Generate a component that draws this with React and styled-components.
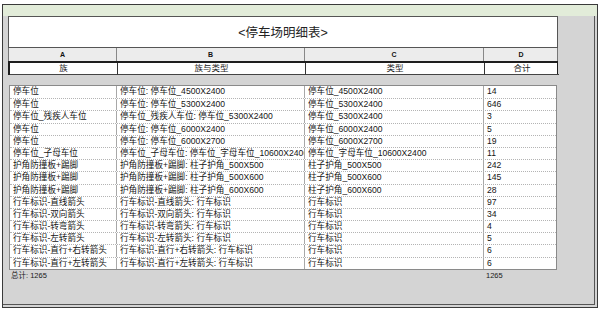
import styled, { createGlobalStyle } from "styled-components";

const GlobalStyle = createGlobalStyle`
  html, body {
    margin: 0;
    padding: 0;
    background: #ffffff;
  }
  body {
    font-family: "Liberation Sans", "Noto Sans CJK SC", sans-serif;
    color: #1a1a1a;
  }
`;

const cols = "108px 188px 179px 74px";

const rows = [
  ["停车位", "停车位: 停车位_4500X2400", "停车位_4500X2400", "14"],
  ["停车位", "停车位: 停车位_5300X2400", "停车位_5300X2400", "646"],
  ["停车位_残疾人车位", "停车位_残疾人车位: 停车位_5300X2400", "停车位_5300X2400", "3"],
  ["停车位", "停车位: 停车位_6000X2400", "停车位_6000X2400", "5"],
  ["停车位", "停车位: 停车位_6000X2700", "停车位_6000X2700", "19"],
  ["停车位_子母车位", "停车位_子母车位: 停车位_字母车位_10600X2400", "停车位_字母车位_10600X2400", "11"],
  ["护角防撞板+踢脚", "护角防撞板+踢脚: 柱子护角_500X500", "柱子护角_500X500", "242"],
  ["护角防撞板+踢脚", "护角防撞板+踢脚: 柱子护角_500X600", "柱子护角_500X600", "145"],
  ["护角防撞板+踢脚", "护角防撞板+踢脚: 柱子护角_600X600", "柱子护角_600X600", "28"],
  ["行车标识-直线箭头", "行车标识-直线箭头: 行车标识", "行车标识", "97"],
  ["行车标识-双向箭头", "行车标识-双向箭头: 行车标识", "行车标识", "34"],
  ["行车标识-转弯箭头", "行车标识-转弯箭头: 行车标识", "行车标识", "4"],
  ["行车标识-左转箭头", "行车标识-左转箭头: 行车标识", "行车标识", "5"],
  ["行车标识-直行+右转箭头", "行车标识-直行+右转箭头: 行车标识", "行车标识", "6"],
  ["行车标识-直行+左转箭头", "行车标识-直行+左转箭头: 行车标识", "行车标识", "6"],
];

export default function App() {
  return (
    <>
      <GlobalStyle />
      <Frame>
        <TitleBar />
        <Body>
          <Sheet>
            <TitleBox>&lt;停车场明细表&gt;</TitleBox>
            <LetterRow>
              <Letter>A</Letter>
              <Letter>B</Letter>
              <Letter>C</Letter>
              <Letter last>D</Letter>
            </LetterRow>
            <NameRow>
              <Name>族</Name>
              <Name>族与类型</Name>
              <Name>类型</Name>
              <Name last>合计</Name>
            </NameRow>
            <Gap />
            <Data>
              {rows.map((r, i) => (
                <Row key={i} first={i === 0}>
                  {r.map((c, j) => (
                    <Cell key={j} last={j === 3}>
                      {c}
                    </Cell>
                  ))}
                </Row>
              ))}
            </Data>
            <TotalRow>
              <TotalLabel>总计: 1265</TotalLabel>
              <TotalSum>1265</TotalSum>
            </TotalRow>
          </Sheet>
        </Body>
      </Frame>
    </>
  );
}

const Frame = styled.div`
  margin: 4px 0 0 2px;
  width: 596px;
  height: 304px;
  box-sizing: border-box;
  border: 1px solid #3a3a3a;
  background: #d4d4d4;
  display: flex;
  flex-direction: column;
`;

const TitleBar = styled.div`
  height: 11px;
  background: #e2ecd9;
  flex: none;
`;

const Body = styled.div`
  flex: 1;
  margin: 0 2px 2px 0;
  border-right: 1px solid #555;
  border-bottom: 1px solid #555;
  padding: 0 0 0 5px;
`;

const Sheet = styled.div`
  width: 550px;
  display: flex;
  flex-direction: column;
`;

const TitleBox = styled.div`
  height: 29px;
  background: #fff;
  border: 1px solid #555;
  display: flex;
  align-items: center;
  justify-content: center;
  font-size: 12.5px;
  color: #222;
  padding-bottom: 1px;
`;

const LetterRow = styled.div`
  display: grid;
  grid-template-columns: ${cols};
  height: 13px;
  background: #ececec;
  border-left: 1px solid #777;
  border-right: 1px solid #777;
`;

const Letter = styled.div`
  font-size: 7px;
  font-weight: bold;
  text-align: center;
  line-height: 13px;
  color: #111;
  border-right: ${(p) => (p.last ? "none" : "1px solid #888")};
`;

const NameRow = styled.div`
  display: grid;
  grid-template-columns: ${cols};
  height: 11px;
  background: #fff;
  border: 1px solid #1e1e1e;
  border-top-width: 2px;
  border-left-width: 2px;
`;

const Name = styled.div`
  font-size: 8.5px;
  line-height: 11px;
  text-align: center;
  color: #222;
  border-right: ${(p) => (p.last ? "none" : "1px solid #333")};
  border-bottom: 1px solid #444;
`;

const Gap = styled.div`
  height: 10px;
`;

const Data = styled.div`
  background: #fff;
  border: 1px solid #8a8a8a;
  margin-left: 1px;
  width: 548px;
  box-sizing: border-box;
`;

const Row = styled.div`
  display: grid;
  grid-template-columns: 107px 188px 179px 72px;
  height: 12.2px;
  border-top: ${(p) => (p.first ? "none" : "1px dotted #b4b4b4")};
  box-sizing: border-box;
`;

const Cell = styled.div`
  font-size: 8.6px;
  line-height: 11.5px;
  padding-left: 3px;
  white-space: nowrap;
  overflow: hidden;
  color: #151515;
  border-right: ${(p) => (p.last ? "none" : "1px solid #a8a8a8")};
`;

const TotalRow = styled.div`
  display: grid;
  grid-template-columns: 475px 74px;
  height: 12px;
  margin-left: -4px;
`;

const TotalLabel = styled.div`
  font-size: 7.5px;
  line-height: 12px;
  padding-left: 7px;
  color: #1a1a1a;
`;

const TotalSum = styled.div`
  font-size: 7.5px;
  line-height: 12px;
  padding-left: 7px;
  color: #1a1a1a;
`;
